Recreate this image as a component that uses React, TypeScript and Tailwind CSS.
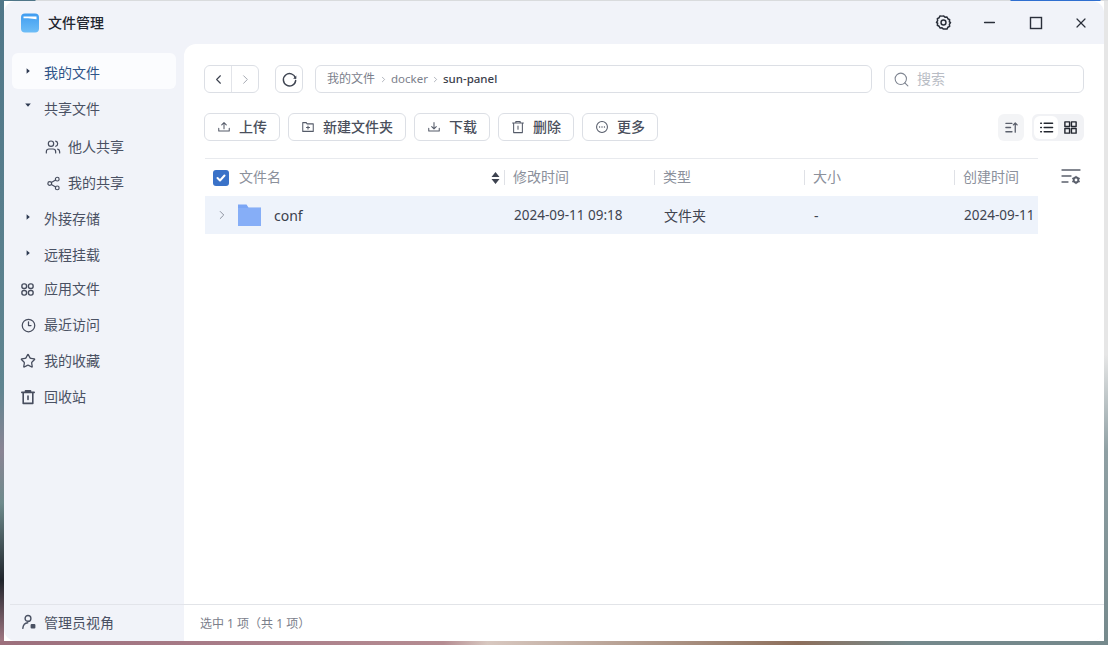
import type { ReactNode } from "react";
import { ChevronRight, ChevronLeft, Search, Star, Clock3, Users, Share2, X, Minus } from "lucide-react";

function SvgIcon({ size = 16, className = "", children }: { size?: number; className?: string; children: ReactNode }) {
    return (
        <svg width={size} height={size} viewBox="0 0 16 16" fill="none" stroke="currentColor" strokeWidth="1.2" strokeLinecap="round" strokeLinejoin="round" className={className}>
            {children}
        </svg>
    );
}

function Caret({ down = false }: { down?: boolean }) {
    return (
        <svg width="8" height="8" viewBox="0 0 8 8" className={`-ml-[1px] text-[#2c3850] ${down ? "-mt-[4px]" : ""}`} fill="currentColor">
            {down ? <path d="M1.2 2.4h5.6L4 5.8z" /> : <path d="M2.6 1.2 5.8 4 2.6 6.8z" />}
        </svg>
    );
}

function NavRow({ label, icon, caret = false, active = false, indent = false, className = "" }: { label: string; icon: ReactNode; caret?: boolean; active?: boolean; indent?: boolean; className?: string }) {
    return (
        <div className={`flex h-9 shrink-0 items-center rounded-md ${indent ? "pl-[33px]" : "pl-[8px]"} ${active ? "bg-[#fbfcfe] text-[#2f5488]" : "text-[#4a5163]"} ${className}`}>
            <span className={`flex w-[16px] items-center justify-center text-[#474d5e] ${caret ? "" : "pt-[4px]"}`}>{icon}</span>
            <span className={`${indent ? "ml-[7px]" : "ml-[8px]"} pt-[3px] text-[14px]`}>{label}</span>
        </div>
    );
}

function ToolButton({ label, icon, width }: { label: string; icon: ReactNode; width: string }) {
    return (
        <button type="button" className={`flex h-[28px] ${width} items-center justify-center gap-[8px] rounded-md border border-[#dcdfe5] bg-white text-[14px] font-medium text-[#4a4f5c]`}>
            <span className="text-[#555b69]">{icon}</span>
            <span className="pb-[2px]">{label}</span>
        </button>
    );
}

const columns = [
    { name: "文件名", width: "w-[300px]" },
    { name: "修改时间", width: "w-[150px]" },
    { name: "类型", width: "w-[150px]" },
    { name: "大小", width: "w-[150px]" },
    { name: "创建时间", width: "w-[150px]" },
];

export default function App() {
    return (
        <div className="h-[645px] w-[1108px] overflow-hidden pl-[4px] pr-[4px] pt-[1px] font-['Noto_Sans','Noto_Sans_CJK_SC',sans-serif] [background:linear-gradient(90deg,#9c6f7c_0%,#a87c88_20%,#b58c92_40%,#d8c8c0_44%,#8d6f5c_72%,#75898c_82%,#75898c_100%)_bottom/100%_4px_no-repeat,linear-gradient(90deg,#4f7688_0,#4f7688_35px,#d9dbdd_36px,#d9dbdd_1010px,#2f6fd0_1011px,#2f6fd0_1100px,#d9dbdd_1101px)_top/100%_1px_no-repeat,linear-gradient(180deg,#4f7688_0%,#5f8490_60%,#8a8494_70%,#6e8a8c_78%,#20242c_90%,#a87c88_100%)_left/4px_100%_no-repeat,linear-gradient(180deg,#e6e6e6_0%,#e6e6e6_55%,#8fa0a4_70%,#75898c_100%)_right/4px_100%_no-repeat]">
            <div className="flex h-[640px] w-[1100px] flex-col overflow-hidden rounded-[12px] bg-[#f1f3f9]">
                {/* title bar */}
                <header className="flex h-[43px] shrink-0 items-center pl-[17px] pr-[15px]">
                    <svg width="18" height="20" viewBox="0 0 18 20">
                        <defs>
                            <linearGradient id="appBlue" x1="0" y1="0" x2="0" y2="1">
                                <stop offset="0" stopColor="#3f9cf0" />
                                <stop offset="1" stopColor="#6dbdf7" />
                            </linearGradient>
                        </defs>
                        <rect width="18" height="19" y="0.5" rx="4" fill="url(#appBlue)" />
                        <path d="M2.5 3.5h13v2.8L7 5.2H2.5z" fill="#fff" />
                    </svg>
                    <span className="ml-[9px] text-[14px] font-medium text-[#222630]">文件管理</span>
                    <div className="ml-auto flex items-center text-[#2a2f3a]">
                        <SvgIcon size={17}>
                            <path d="M8 1.8 9.4 3l1.9-.2.8 1.7 1.7.9-.3 1.9L14.6 8l-1.1 1.7.3 1.9-1.7.9-.8 1.7-1.9-.2L8 14.2 6.6 13l-1.9.2-.8-1.7-1.7-.9.3-1.9L1.4 8l1.1-1.7-.3-1.9 1.7-.9.8-1.7 1.9.2z" strokeWidth="1.4" />
                            <circle cx="8" cy="8" r="2.3" strokeWidth="1.4" />
                        </SvgIcon>
                        <Minus size={17} strokeWidth={1.8} className="ml-[29px]" />
                        <svg width="14" height="14" viewBox="0 0 14 14" fill="none" stroke="currentColor" strokeWidth="1.4" className="ml-[31px]">
                            <rect x="1.5" y="1.5" width="11" height="11" />
                        </svg>
                        <X size={16} strokeWidth={1.8} className="ml-[30px]" />
                    </div>
                </header>

                <div className="flex min-h-0 flex-1">
                    {/* sidebar */}
                    <aside className="flex w-[180px] shrink-0 flex-col">
                        <nav className="flex flex-col pl-[8px] pr-[8px] pt-[9px]">
                            <NavRow active caret label="我的文件" icon={<Caret />} />
                            <NavRow caret label="共享文件" icon={<Caret down />} />
                            <NavRow indent className="mt-[2px]" label="他人共享" icon={<Users size={16} strokeWidth={1.8} />} />
                            <NavRow indent label="我的共享" icon={<Share2 size={15} strokeWidth={1.9} />} />
                            <NavRow caret label="外接存储" icon={<Caret />} />
                            <NavRow caret label="远程挂载" icon={<Caret />} />
                            <NavRow
                                className="-mt-[2px]"
                                label="应用文件"
                                icon={
                                    <SvgIcon size={15} className="-ml-[1px]">
                                        <rect x="2" y="2" width="5" height="5" rx="2.2" strokeWidth="1.5" />
                                        <rect x="9" y="2" width="5" height="5" rx="2.2" strokeWidth="1.5" />
                                        <rect x="2" y="9" width="5" height="5" rx="2.2" strokeWidth="1.5" />
                                        <rect x="9" y="9" width="5" height="5" rx="2.2" strokeWidth="1.5" />
                                    </SvgIcon>
                                }
                            />
                            <NavRow label="最近访问" icon={<Clock3 size={15} strokeWidth={2} />} />
                            <NavRow label="我的收藏" icon={<Star size={16} strokeWidth={1.9} />} />
                            <NavRow
                                label="回收站"
                                icon={
                                    <SvgIcon size={16}>
                                        <path d="M1.8 3.4h12.4M5.5 3.2V1.8h5v1.4M3.2 3.4v11h9.6v-11M8 7v3.5" strokeWidth="1.6" />
                                    </SvgIcon>
                                }
                            />
                        </nav>
                        <div className="mt-auto ml-[6px] flex h-[37px] items-center border-t border-[#e2e4ea] pb-[2px] pl-[11px] text-[14px] text-[#4a5163]">
                            <SvgIcon size={16}>
                                <circle cx="7" cy="4.4" r="2.9" strokeWidth="1.4" />
                                <path d="M1.8 14.4c.3-3.2 2-5.4 5-5.6" strokeWidth="1.4" />
                                <rect x="9.6" y="10" width="4.8" height="4.4" rx="1" fill="currentColor" stroke="none" />
                            </SvgIcon>
                            <span className="ml-[7px]">管理员视角</span>
                        </div>
                    </aside>

                    {/* main panel */}
                    <main className="flex min-w-0 flex-1 flex-col rounded-tl-[12px] bg-white">
                        <div className="flex min-h-0 flex-1 flex-col pl-[20px] pr-[20px] pt-[21px]">
                            {/* path row */}
                            <div className="flex h-[28px] items-center">
                                <div className="flex h-[28px] w-[55px] rounded-md border border-[#dcdfe5]">
                                    <span className="flex flex-1 items-center justify-center border-r border-[#e2e4e9] text-[#3f4552]">
                                        <ChevronLeft size={15} strokeWidth={1.8} />
                                    </span>
                                    <span className="flex flex-1 items-center justify-center text-[#a5a9b2]">
                                        <ChevronRight size={15} strokeWidth={1.6} />
                                    </span>
                                </div>
                                <button type="button" className="ml-[16px] flex h-[28px] w-[28px] items-center justify-center rounded-md border border-[#dcdfe5] text-[#3f4552]">
                                    <SvgIcon size={17}>
                                        <path d="M13.6 6.6A5.8 5.8 0 1 0 13.8 9" strokeWidth="1.4" />
                                        <path d="M14.4 4.2v3h-3" fill="currentColor" stroke="none" />
                                    </SvgIcon>
                                </button>
                                <div className="ml-[12px] flex h-[28px] w-[557px] items-center rounded-md border border-[#dcdfe5] pl-[11px] text-[12px] text-[#7b808b]">
                                    <span>我的文件</span>
                                    <ChevronRight size={9} className="mx-[3.5px] text-[#9a9ea8]" />
                                    <span className="text-[11.5px]">docker</span>
                                    <ChevronRight size={9} className="mx-[3px] text-[#9a9ea8]" />
                                    <span className="text-[11.5px] font-medium text-[#3b404c]">sun-panel</span>
                                </div>
                                <div className="ml-[12px] flex h-[28px] w-[200px] items-center rounded-md border border-[#dcdfe5] pl-[8px] text-[14px] text-[#b9bdc5]">
                                    <Search size={17} strokeWidth={1.5} className="text-[#7f8591]" />
                                    <span className="ml-[7px] pb-[1px]">搜索</span>
                                </div>
                            </div>

                            {/* actions row */}
                            <div className="mt-[20px] flex h-[28px] items-center gap-[8px]">
                                <ToolButton
                                    width="w-[76px]"
                                    label="上传"
                                    icon={
                                        <SvgIcon size={14}>
                                            <path d="M2 9.5v3h12v-3M8 10V3.2M5.4 5.6 8 3l2.6 2.6" />
                                        </SvgIcon>
                                    }
                                />
                                <ToolButton
                                    width="w-[118px]"
                                    label="新建文件夹"
                                    icon={
                                        <SvgIcon size={14}>
                                            <path d="M2 3h4l1 1.4h7V13H2zM8 6.8v3.6M6.2 8.6h3.6" />
                                        </SvgIcon>
                                    }
                                />
                                <ToolButton
                                    width="w-[76px]"
                                    label="下载"
                                    icon={
                                        <SvgIcon size={14}>
                                            <path d="M2 9.5v3h12v-3M8 3v7M5.4 7.6 8 10.2l2.6-2.6" />
                                        </SvgIcon>
                                    }
                                />
                                <ToolButton
                                    width="w-[76px]"
                                    label="删除"
                                    icon={
                                        <SvgIcon size={14}>
                                            <path d="M1.8 3.4h12.4M5.5 3.2V1.8h5v1.4M3 3.4v11h10v-11M8 7v3.5" />
                                        </SvgIcon>
                                    }
                                />
                                <ToolButton
                                    width="w-[76px]"
                                    label="更多"
                                    icon={
                                        <SvgIcon size={14}>
                                            <circle cx="8" cy="8" r="6.2" />
                                            <path d="M5.2 8h.01M8 8h.01M10.8 8h.01" strokeWidth="1.6" />
                                        </SvgIcon>
                                    }
                                />
                                <div className="ml-auto flex items-center gap-[8px]">
                                    <span className="flex h-[27px] w-[26px] items-center justify-center rounded-md bg-[#f3f4f6] text-[#5b606c]">
                                        <SvgIcon size={15}>
                                            <path d="M2 3.5h6.5M2 8h5M2 12.5h6.5M12 13V3.2M10 5.2l2-2 2 2" strokeWidth="1.4" />
                                        </SvgIcon>
                                    </span>
                                    <div className="flex h-[27px] w-[52px] items-center rounded-md bg-[#f1f2f5] p-[2px]">
                                        <span className="flex h-[23px] w-[24px] items-center justify-center rounded-md bg-white text-[#22262f]">
                                            <SvgIcon size={15}>
                                                <path d="M5.5 3.5h9M5.5 8h9M5.5 12.5h9M1.8 3.5h.8M1.8 8h.8M1.8 12.5h.8" strokeWidth="1.5" />
                                            </SvgIcon>
                                        </span>
                                        <span className="flex h-[23px] w-[24px] items-center justify-center text-[#22262f]">
                                            <SvgIcon size={15}>
                                                <rect x="2" y="2" width="5" height="5" strokeWidth="1.5" />
                                                <rect x="9" y="2" width="5" height="5" strokeWidth="1.5" />
                                                <rect x="2" y="9" width="5" height="5" strokeWidth="1.5" />
                                                <rect x="9" y="9" width="5" height="5" strokeWidth="1.5" />
                                            </SvgIcon>
                                        </span>
                                    </div>
                                </div>
                            </div>

                            {/* table */}
                            <div className="mt-[17px] flex">
                                <div className="ml-[1px] w-[833px] overflow-hidden border-t border-[#e8eaee]">
                                    <div className="flex h-[37px] w-[1050px] items-center">
                                        {columns.map((col, i) => (
                                            <div key={col.name} className={`${col.width} flex h-[37px] shrink-0 items-center text-[14px] text-[#8b909b]`}>
                                                {i === 0 ? (
                                                    <>
                                                        <span className="ml-[8px] flex h-[16px] w-[16px] items-center justify-center rounded-[3px] bg-[#3a72c8] text-white">
                                                            <svg width="12" height="12" viewBox="0 0 12 12" fill="none" stroke="currentColor" strokeWidth="2" strokeLinecap="round" strokeLinejoin="round">
                                                                <path d="m2.5 6 2.5 2.5 4.5-5" />
                                                            </svg>
                                                        </span>
                                                        <span className="ml-[10px] pb-[2px]">{col.name}</span>
                                                        <svg width="9" height="14" viewBox="0 0 9 14" className="ml-auto mr-[5px] text-[#3d4350]" fill="currentColor">
                                                            <path d="M4.5 1 8.5 6h-8zM.5 8h8l-4 5z" />
                                                        </svg>
                                                    </>
                                                ) : (
                                                    <>
                                                        <span className="-ml-px h-[15px] w-px bg-[#dfe1e6]" />
                                                        <span className="ml-[8px] pb-[2px]">{col.name}</span>
                                                    </>
                                                )}
                                            </div>
                                        ))}
                                    </div>
                                    <div className="flex h-[38px] w-[1050px] items-center bg-[#eef3fb] text-[14px] text-[#3f4450]">
                                        <div className="flex w-[300px] shrink-0 items-center">
                                            <ChevronRight size={14} strokeWidth={1.5} className="ml-[10px] text-[#7f8591]" />
                                            <svg width="25" height="24" viewBox="0 0 25 24" className="ml-[8px]">
                                                <path d="M1 1.5h8.5l2 3H24V23H1z" fill="#7ba6f5" />
                                                <path d="M1 5h23v18H1z" fill="#86aef7" />
                                            </svg>
                                            <span className="ml-[12px] text-[#3b404c]">conf</span>
                                        </div>
                                        <div className="w-[150px] shrink-0 pl-[9px] text-[13.5px]">2024-09-11 09:18</div>
                                        <div className="w-[150px] shrink-0 pl-[9px]">文件夹</div>
                                        <div className="w-[150px] shrink-0 pl-[9px]">-</div>
                                        <div className="w-[150px] shrink-0 pl-[9px] text-[13.5px]">2024-09-11 09:18</div>
                                    </div>
                                </div>
                                <span className="ml-[22px] mt-[9px] h-fit text-[#5b606c]">
                                    <svg width="22" height="20" viewBox="0 0 22 20" fill="none" stroke="currentColor" strokeWidth="1.3" strokeLinecap="round">
                                        <path d="M2 3h18M2 9h9M2 15h6" />
                                        <circle cx="16" cy="13" r="2.4" strokeWidth="2" />
                                        <path d="M16 9.4v1M16 15.6v1M12.6 11.3l.9.5M18.5 14.2l.9.5M12.6 14.7l.9-.5M18.5 11.8l.9-.5" strokeWidth="1.2" />
                                    </svg>
                                </span>
                            </div>
                        </div>

                        {/* status bar */}
                        <div className="flex h-[37px] shrink-0 items-center border-t border-[#e2e4e8] pl-[16px] pt-[2px] text-[12px] text-[#7b808b]">
                            选中 1 项（共 1 项）
                        </div>
                    </main>
                </div>
            </div>
        </div>
    );
}
